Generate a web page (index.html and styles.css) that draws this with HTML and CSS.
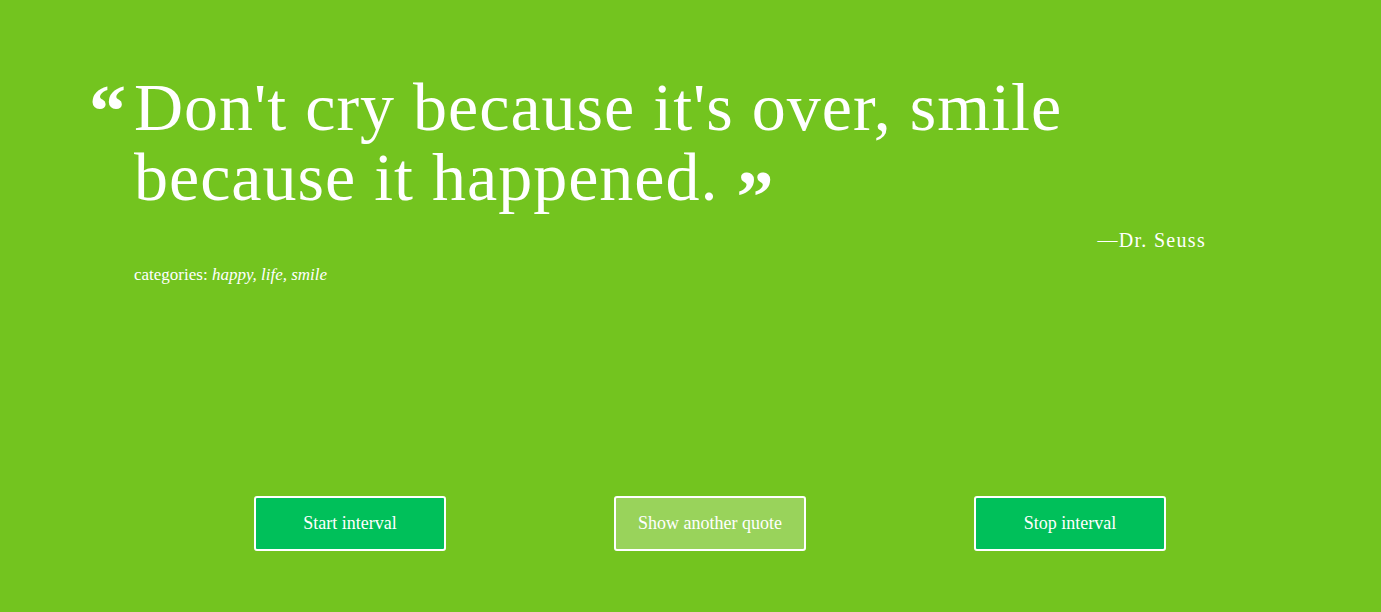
FILE: index.html
```html
<!DOCTYPE html>
<html lang="en">
<head>
<meta charset="utf-8">
<title>Random Quote</title>
<link rel="stylesheet" href="styles.css">
</head>
<body>
<main class="page">
  <section class="quote-box">
    <blockquote class="quote">
      <span class="quote-open">“</span>
      <p class="quote-text">Don't cry because it's over, smile because it happened.<span class="quote-close">”</span></p>
    </blockquote>
    <p class="author">—Dr. Seuss</p>
    <p class="categories">categories: <em>happy, life, smile</em></p>
  </section>
  <div class="controls">
    <div class="control-cell"><button class="btn btn-solid">Start interval</button></div>
    <div class="control-cell"><button class="btn btn-light">Show another quote</button></div>
    <div class="control-cell"><button class="btn btn-solid">Stop interval</button></div>
  </div>
</main>
</body>
</html>
```
FILE: styles.css
```css
html, body {
  margin: 0;
  padding: 0;
}
body {
  background: #73c41f;
  color: #ffffff;
  font-family: "Liberation Serif", "DejaVu Serif", serif;
  height: 612px;
  overflow: hidden;
}
.page {
  padding-top: 72px;
}
.quote-box {
  margin-left: 89px;
  width: 1117px;
}
.quote {
  margin: 0;
  display: flex;
  align-items: flex-start;
}
.quote-open {
  width: 45px;
  flex: none;
  font-size: 74px;
  font-weight: bold;
  line-height: 70px;
  margin-top: 4px;
}
.quote-text {
  margin: 0;
  font-size: 68px;
  line-height: 70px;
  letter-spacing: 1px;
  width: 1000px;
}
.quote-close {
  display: inline-block;
  font-size: 74px;
  font-weight: bold;
  margin-left: 18px;
  vertical-align: -22px;
  line-height: 0;
  letter-spacing: 0;
}
.author {
  margin: 16px 0 0;
  text-align: right;
  font-size: 20px;
  line-height: 24px;
  letter-spacing: 1.3px;
}
.categories {
  margin: 13px 0 0 45px;
  font-size: 17px;
  line-height: 20px;
}
.categories em {
  font-style: italic;
}
.controls {
  margin-top: 211px;
  margin-left: 170px;
  display: grid;
  grid-template-columns: repeat(3, 360px);
}
.control-cell {
  display: flex;
  justify-content: center;
}
.btn {
  width: 192px;
  height: 55px;
  border: 2px solid #ffffff;
  border-radius: 3px;
  color: #ffffff;
  font-family: "Liberation Serif", "DejaVu Serif", serif;
  font-size: 18px;
  cursor: pointer;
}
.btn-solid {
  background: #00c05a;
}
.btn-light {
  background: #99d35b;
}
```
